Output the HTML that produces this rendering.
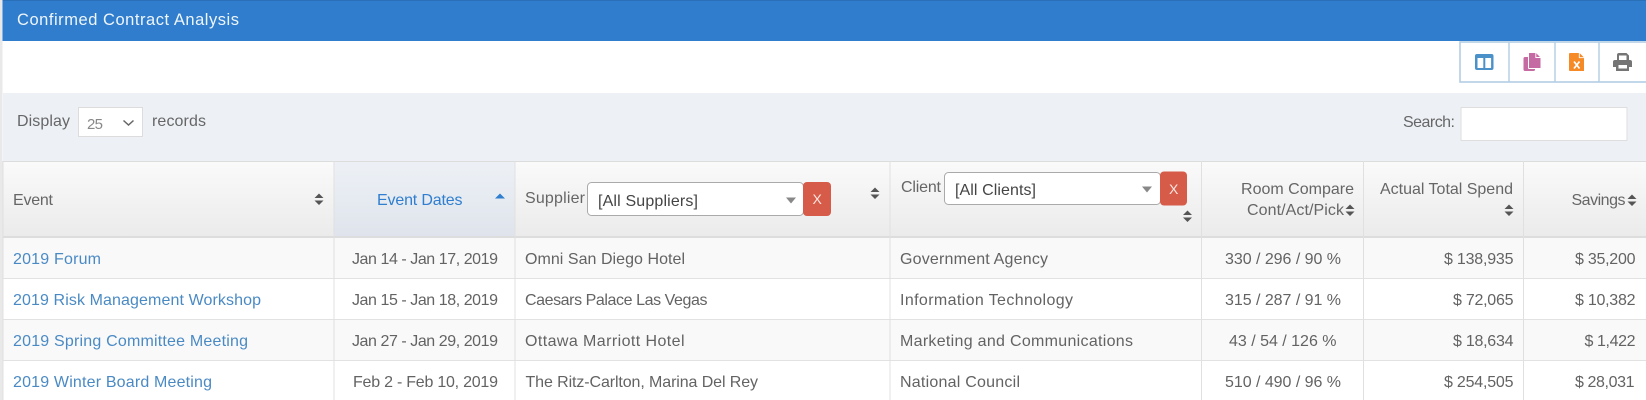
<!DOCTYPE html>
<html lang="en">
<head>
<meta charset="utf-8">
<title>Confirmed Contract Analysis</title>
<style>
html,body{margin:0;padding:0;background:#fff;width:1646px;height:400px;overflow:hidden}
svg{display:block;filter:blur(.35px)}
text{font-family:"Liberation Sans",sans-serif;font-size:16px;fill:#666}
.l{fill:#4a8ac4}
.d{fill:#636363}
</style>
</head>
<body>
<svg width="1646" height="400" viewBox="0 0 1646 400" xmlns="http://www.w3.org/2000/svg">
<defs>
<linearGradient id="h" x1="0" y1="0" x2="0" y2="1"><stop offset="0" stop-color="#fafafa"/><stop offset="1" stop-color="#ebebeb"/></linearGradient>
<linearGradient id="s" x1="0" y1="0" x2="0" y2="1"><stop offset="0" stop-color="#edf1f6"/><stop offset="1" stop-color="#dfe4ec"/></linearGradient>
<g id="sort"><path d="M-4.500-1 L0-5.500 L4.500-1Z M-4.500 1.500 L0 6 L4.500 1.500Z" fill="#555"/></g>
</defs>

<rect x="0" y="0" width="2.5" height="400" fill="#e9e9e9"/>
<rect x="2.500" y="0" width="1644" height="41" fill="#2f7dcc"/>
<rect x="2.500" y="0" width="1644" height="1" fill="#2a70b8"/>
<text x="17" y="25" textLength="222" style="fill:#eef5fb;font-size:16.500px">Confirmed Contract Analysis</text>

<!-- toolbar -->
<rect x="1460" y="42" width="190" height="40" fill="#fff" stroke="#b2cde4" stroke-width="1.6"/>
<path d="M1509 42V82M1555 42V82M1599 42V82" stroke="#b2cde4" stroke-width="1.4" fill="none"/>
<rect x="1475" y="54" width="18.500" height="16" rx="2" fill="#4a90c9"/>
<rect x="1477.500" y="58" width="5.800" height="10" fill="#fff"/>
<rect x="1485.300" y="58" width="5.800" height="10" fill="#fff"/>
<rect x="1523.500" y="57" width="11.500" height="14" rx="1.500" fill="#c56aa2"/>
<path d="M1529.500 53H1536L1540.500 57.500V68.500H1529.500Z" fill="#c56aa2" stroke="#fff" stroke-width="1"/>
<path d="M1529 53H1536L1540.500 57.500V68H1529Z" fill="#c56aa2"/>
<path d="M1528.500 53V68.500" stroke="#fff" stroke-width="1" fill="none"/>
<path d="M1528.500 68.500H1535" stroke="#fff" stroke-width="1" fill="none"/>
<path d="M1535.800 53V57.500H1540.500" fill="none" stroke="#fff" stroke-width=".9"/>
<path d="M1570 53H1579.500L1584 57.500V71H1570Q1569 71 1569 70V54Q1569 53 1570 53Z" fill="#f58a26"/>
<path d="M1579.300 53V57.700H1584" fill="none" stroke="#fff" stroke-width=".9"/>
<path d="M1574 61.500L1579.500 68.500M1579.500 61.500L1574 68.500" stroke="#fff" stroke-width="1.700" fill="none"/>
<path d="M1617 60V55Q1617 53 1619 53H1626.500L1629 55.500V60H1630Q1632 60 1632 62V67H1629V71H1616V67H1613V62Q1613 60 1615 60Z" fill="#757575"/>
<rect x="1619" y="55.500" width="7.500" height="4.500" fill="#fff"/>
<rect x="1618.500" y="65" width="8.500" height="3.500" fill="#fff"/>

<!-- length and filter bar -->
<rect x="3" y="93" width="1643" height="68.500" fill="#edf1f6"/>
<text x="17" y="126" textLength="53">Display</text>
<rect x="78.500" y="107.500" width="64" height="29" fill="#fff" stroke="#dcdcdc"/>
<text x="87" y="129" textLength="16" style="fill:#888;font-size:15px">25</text>
<path d="M123.500 120.500L128.500 125L133.500 120.500" fill="none" stroke="#666" stroke-width="1.500"/>
<text x="152" y="126" textLength="54">records</text>
<text x="1403" y="127" textLength="52">Search:</text>
<rect x="1461" y="107.500" width="166" height="33" fill="#fff" stroke="#dedede"/>

<!-- table header -->
<rect x="3" y="161.500" width="1643" height="75" fill="url(#h)"/>
<rect x="334" y="161.500" width="181" height="75" fill="url(#s)"/>
<rect x="3" y="161" width="1643" height="1" fill="#dcdcdc"/>
<rect x="3" y="236" width="1643" height="2" fill="#dddddd"/>

<!-- rows -->
<rect x="3" y="238" width="1643" height="40" fill="#f9f9f9"/>
<rect x="3" y="320" width="1643" height="40" fill="#f9f9f9"/>
<path d="M3 278.500H1646M3 319.500H1646M3 360.500H1646" stroke="#e2e2e2" fill="none"/>
<path d="M3 161V400M334 161V400M515 161V400M890 161V400M1201.500 161V400M1363.500 161V400M1523.500 161V400" stroke="#e0e0e0" fill="none"/>

<!-- header text -->
<text x="13" y="205" textLength="40">Event</text>
<use href="#sort" x="319" y="199"/>
<text x="377" y="205" textLength="85.500" style="fill:#2f7ecf">Event Dates</text>
<path d="M495 198.500L500 193.500L505 198.500Z" fill="#2f7ecf"/>
<text x="525" y="203" textLength="60">Supplier</text>
<rect x="587.500" y="182.500" width="216" height="33" rx="4" fill="#fff" stroke="#aaa"/>
<text x="598" y="206" textLength="100" style="fill:#444">[All Suppliers]</text>
<path d="M786 197.500H796L791 203.500Z" fill="#888"/>
<rect x="803" y="182" width="28" height="34" rx="4" fill="#d65b48"/>
<text x="812.500" y="204" textLength="9" style="fill:#fbe6e2;font-size:14px">X</text>
<use href="#sort" x="875" y="193"/>
<text x="901" y="192" textLength="40">Client</text>
<rect x="944.500" y="172.500" width="216" height="32" rx="4" fill="#fff" stroke="#aaa"/>
<text x="955" y="195" textLength="81" style="fill:#444">[All Clients]</text>
<path d="M1142 186.500H1152L1147 192.500Z" fill="#888"/>
<rect x="1160" y="171.500" width="27" height="34" rx="4" fill="#d65b48"/>
<text x="1169" y="194" textLength="9" style="fill:#fbe6e2;font-size:14px">X</text>
<use href="#sort" x="1187.500" y="216"/>
<text x="1241" y="194" textLength="113">Room Compare</text>
<text x="1247" y="215" textLength="97">Cont/Act/Pick</text>
<use href="#sort" x="1350" y="210"/>
<text x="1380" y="194" textLength="133">Actual Total Spend</text>
<use href="#sort" x="1509" y="210"/>
<text x="1571.500" y="205" textLength="54">Savings</text>
<use href="#sort" x="1632" y="200"/>

<!-- row 1 -->
<text class="l" x="13" y="264" textLength="88">2019 Forum</text>
<text class="d" x="352" y="264" textLength="146">Jan 14 - Jan 17, 2019</text>
<text class="d" x="525" y="264" textLength="160">Omni San Diego Hotel</text>
<text class="d" x="900" y="264" textLength="148">Government Agency</text>
<text class="d" x="1225" y="264" textLength="116">330 / 296 / 90 %</text>
<text class="d" x="1444" y="264" textLength="69.500">$ 138,935</text>
<text class="d" x="1575" y="264" textLength="60.500">$ 35,200</text>
<!-- row 2 -->
<text class="l" x="13" y="305" textLength="248">2019 Risk Management Workshop</text>
<text class="d" x="352" y="305" textLength="146">Jan 15 - Jan 18, 2019</text>
<text class="d" x="525" y="305" textLength="182.500">Caesars Palace Las Vegas</text>
<text class="d" x="900" y="305" textLength="173">Information Technology</text>
<text class="d" x="1225" y="305" textLength="116">315 / 287 / 91 %</text>
<text class="d" x="1453" y="305" textLength="60.500">$ 72,065</text>
<text class="d" x="1575" y="305" textLength="60.500">$ 10,382</text>
<!-- row 3 -->
<text class="l" x="13" y="346" textLength="235">2019 Spring Committee Meeting</text>
<text class="d" x="352" y="346" textLength="146">Jan 27 - Jan 29, 2019</text>
<text class="d" x="525" y="346" textLength="159.500">Ottawa Marriott Hotel</text>
<text class="d" x="900" y="346" textLength="233">Marketing and Communications</text>
<text class="d" x="1229" y="346" textLength="107.500">43 / 54 / 126 %</text>
<text class="d" x="1453" y="346" textLength="60.500">$ 18,634</text>
<text class="d" x="1584.500" y="346" textLength="51">$ 1,422</text>
<!-- row 4 -->
<text class="l" x="13" y="387" textLength="199">2019 Winter Board Meeting</text>
<text class="d" x="353" y="387" textLength="145">Feb 2 - Feb 10, 2019</text>
<text class="d" x="525.500" y="387" textLength="232.500">The Ritz-Carlton, Marina Del Rey</text>
<text class="d" x="900" y="387" textLength="120">National Council</text>
<text class="d" x="1225" y="387" textLength="116">510 / 490 / 96 %</text>
<text class="d" x="1444" y="387" textLength="69.500">$ 254,505</text>
<text class="d" x="1575" y="387" textLength="59.500">$ 28,031</text>
</svg>
</body>
</html>
